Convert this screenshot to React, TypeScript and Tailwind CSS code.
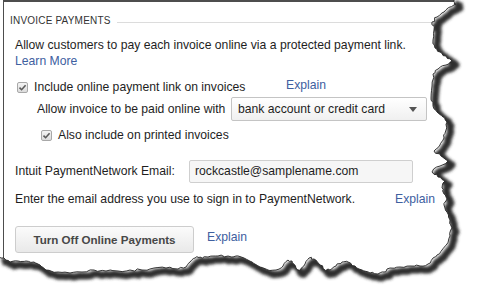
import React from 'react'

const rightEdge: [number, number][] = [
    [456, -2], [454, 2], [456, 4], [450, 7], [444, 12], [437, 17], [432, 22], [434, 30], [433, 40],
    [435, 48], [440, 52], [446, 56], [452, 61], [446, 65], [438, 69], [433, 74], [432, 86], [431, 98],
    [433, 106], [437, 112], [443, 117], [447, 122], [446, 130], [444, 138], [440, 145], [434, 151],
    [441, 156], [448, 161], [440, 166], [432, 172], [438, 177], [445, 181], [442, 188], [444, 194],
    [447, 199], [444, 205], [447, 212], [450, 220], [452, 228], [450, 236], [447, 244], [442, 250],
    [437, 255], [433, 258],
]

const bottomEdge: [number, number][] = [
    [428, 264], [420, 266], [410, 266], [400, 267], [390, 268], [384, 272], [378, 274], [370, 273],
    [362, 270], [355, 266], [348, 262], [342, 262], [336, 266], [330, 270], [325, 270], [320, 265],
    [314, 259], [309, 258], [305, 264], [300, 270], [296, 268], [292, 261], [288, 260], [283, 266],
    [276, 270], [268, 270], [260, 267], [252, 262], [244, 258], [236, 256], [228, 256], [218, 256],
    [208, 257], [200, 257], [195, 258], [190, 262], [186, 267], [178, 269], [166, 268], [154, 268],
    [142, 270], [130, 270], [118, 271], [106, 271], [94, 270], [82, 272], [70, 273], [58, 272],
    [46, 270], [40, 265], [34, 262], [26, 261], [18, 261], [10, 262], [4, 258], [-2, 258],
]

// add small rough jitter between the hand picked points
const roughen = (pts: [number, number][]) => {
    let seed = 7
    const rnd = () => {
        seed = (seed * 9301 + 49297) % 233280
        return seed / 233280 - 0.5
    }
    const out: [number, number][] = []
    for (let i = 0; i < pts.length - 1; i++) {
        const [x1, y1] = pts[i]
        const [x2, y2] = pts[i + 1]
        out.push([x1, y1])
        for (let k = 1; k < 3; k++) {
            const t = k / 3
            out.push([x1 + (x2 - x1) * t + rnd() * 2.2, y1 + (y2 - y1) * t + rnd() * 2.2])
        }
    }
    out.push(pts[pts.length - 1])
    return out
}

const edge = roughen([...rightEdge, ...bottomEdge])
const line = edge.map(([x, y]) => `${x.toFixed(1)},${y.toFixed(1)}`).join(' ')
const outside = `${line} -2,300 479,300 479,-2`

const TornEdge = () => (
    <svg className="absolute inset-0 pointer-events-none" width="477" height="298" viewBox="0 0 477 298">
        <defs>
            <filter id="blur" x="-10%" y="-10%" width="120%" height="120%">
                <feGaussianBlur stdDeviation="1.6" />
            </filter>
            <clipPath id="out">
                <polygon points={outside} />
            </clipPath>
        </defs>
        <polygon points={outside} fill="#ffffff" />
        <g clipPath="url(#out)">
            <polyline
                points={line}
                fill="none"
                stroke="#2e2e2e"
                strokeWidth="7"
                strokeLinejoin="round"
                transform="translate(4 4)"
                filter="url(#blur)"
            />
        </g>
        <polyline points={line} fill="none" stroke="#222" strokeWidth="0.9" strokeLinejoin="round" />
    </svg>
)

const Check = () => (
    <span className="w-[11px] h-[11px] border border-[#a8a8a8] rounded-[2px] bg-gradient-to-b from-[#f4f4f4] to-[#dcdcdc] flex items-center justify-center">
        <svg width="9" height="9" viewBox="0 0 9 9">
            <path d="M1.5 4.6 L3.6 6.7 L7.6 2.2" fill="none" stroke="#5a5a5a" strokeWidth="1.6" />
        </svg>
    </span>
)

const Link = ({ children }: { children: React.ReactNode }) => (
    <span className="text-[#40609f]">{children}</span>
)

const App = () => {
    return (
        <div
            className="relative w-[477px] h-[298px] bg-white overflow-hidden text-[12.2px] text-[#1e1e1e]"
            style={{ fontFamily: '"Liberation Sans", Arial, sans-serif' }}
        >
            <div className="ml-[3px] h-[262px] border-l border-t-2 border-[#4d4d4d] pl-[11px]">
                <div className="flex items-center mt-[11px] -ml-[5px] h-[14px]">
                    <span className="text-[10px] text-[#333] tracking-[0.2px]">INVOICE PAYMENTS</span>
                    <span className="flex-1 h-px bg-[#dcdcdc] ml-[6px] mt-[5px]" />
                </div>
                <div className="mt-[10px] leading-[16px]">
                    Allow customers to pay each invoice online via a protected payment link.
                </div>
                <div className="leading-[16px]">
                    <Link>Learn More</Link>
                </div>
                <div className="flex items-center mt-[10px] h-[16px]">
                    <div className="w-[271px] flex items-center gap-[6px] pl-[2px]">
                        <Check />
                        <span>Include online payment link on invoices</span>
                    </div>
                    <span className="-mt-[4px]">
                        <Link>Explain</Link>
                    </span>
                </div>
                <div className="flex items-center mt-[2px] h-[24px] pl-[22px]">
                    <span className="w-[194px]">Allow invoice to be paid online with</span>
                    <div className="w-[196px] h-[24px] border border-[#c4c4c4] rounded-[2px] bg-gradient-to-b from-[#ffffff] to-[#f0f0f0] flex items-center justify-between pl-[6px] pr-[9px]">
                        <span>bank account or credit card</span>
                        <svg width="8" height="5" viewBox="0 0 8 5">
                            <path d="M0 0 H8 L4 5 Z" fill="#555" />
                        </svg>
                    </div>
                </div>
                <div className="flex items-center gap-[6px] mt-[6px] h-[16px] pl-[26px]">
                    <Check />
                    <span>Also include on printed invoices</span>
                </div>
                <div className="flex items-center mt-[17px] h-[23px]">
                    <span className="w-[174px]">Intuit PaymentNetwork Email:</span>
                    <div className="w-[224px] h-[23px] border border-[#cfcfcf] rounded-[2px] bg-[#f6f6f6] flex items-center pl-[5px]">
                        rockcastle@samplename.com
                    </div>
                </div>
                <div className="flex items-center mt-[8px] h-[16px]">
                    <span className="w-[380px]">Enter the email address you use to sign in to PaymentNetwork.</span>
                    <Link>Explain</Link>
                </div>
                <div className="flex items-center mt-[19px]">
                    <button className="w-[179px] h-[27px] border border-[#cdcdcd] rounded-[3px] bg-gradient-to-b from-[#fbfbfb] to-[#e9e9e9] font-bold text-[11.6px] text-[#474747]">
                        Turn Off Online Payments
                    </button>
                    <span className="ml-[13px] -mt-[4px]">
                        <Link>Explain</Link>
                    </span>
                </div>
            </div>
            <TornEdge />
        </div>
    )
}

export default App
